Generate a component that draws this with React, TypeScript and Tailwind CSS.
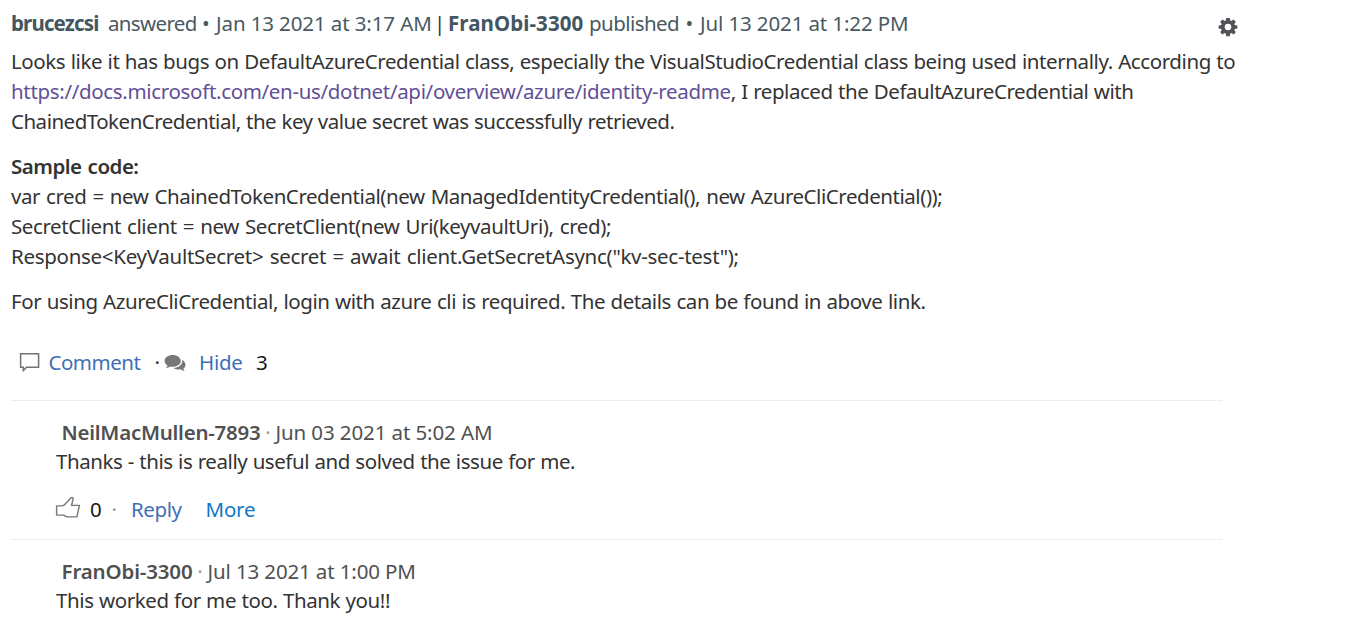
import type { ReactNode } from "react";

function GearIcon() {
  return (
    <svg width="20" height="20" viewBox="0 0 20 20" className="text-[#505357]">
      <path
        fill="currentColor"
        fillRule="evenodd"
        d="M8.2 1h3.6l.5 2.6 1.1.5 2.2-1.5 2.2 2.2-1.5 2.2.5 1.2 2.6.4v2.8l-2.6.5-.5 1.1 1.5 2.2-2.2 2.2-2.2-1.5-1.1.5-.5 2.8H8.2l-.5-2.8-1.1-.5-2.2 1.5-2.2-2.2 1.5-2.2-.5-1.1L.6 11.4V8.6l2.6-.4.5-1.2-1.5-2.2 2.2-2.2 2.2 1.5 1.1-.5ZM10 6.700a3.300 3.300 0 1 0 0 6.600a3.300 3.300 0 0 0 0-6.600Z"
      />
    </svg>
  );
}

function CommentIcon() {
  return (
    <svg width="22" height="20" viewBox="0 0 22 20" fill="none">
      <path
        d="M1.600 1.700h18v13.600H7.500L4.300 18.600v-3.300H1.600Z"
        stroke="#77706c"
        strokeWidth="1.500"
      />
    </svg>
  );
}

function CommentsIcon() {
  return (
    <svg width="22" height="18" viewBox="0 0 22 18" fill="#777">
      <path d="M8.700 1C4.200 1 .6 3.600.6 6.900c0 1.900 1.200 3.500 3 4.600-.3.900-.9 1.600-1.600 2.300 1.700 0 3.200-.6 4.300-1.400.8.200 1.600.3 2.400.3 4.500 0 8.100-2.600 8.100-5.800S13.200 1 8.700 1Z" />
      <path d="M18.200 5.700c.1.400.1.800.1 1.200 0 3.800-3.800 6.700-8.600 7 1.300 1 3.200 1.600 5.200 1.600.7 0 1.300-.1 1.900-.2 1 .9 2.300 1.600 3.900 1.600-.7-.7-1.200-1.300-1.400-2.100 1.400-.9 2.200-2.200 2.200-3.700 0-2.300-1.300-4.200-3.300-5.400Z" />
    </svg>
  );
}

function ThumbIcon() {
  return (
    <svg width="26" height="24" viewBox="0 0 26 24" fill="none">
      <path
        d="M1.600 9.900h5.200c1.600 0 2.400-.6 3.500-1.900l5.500-5.900c1.100-1.200 2.700-.2 2.300 1.200l-1.600 6.100h7.900l-2.500 11.500H11.700l-3.100-1.800h-7Z"
        stroke="#777"
        strokeWidth="1.400"
        strokeLinejoin="round"
      />
    </svg>
  );
}

interface CommentHeaderProps {
  author: ReactNode;
  date: ReactNode;
}

function CommentHeader({ author, date }: CommentHeaderProps) {
  return (
    <div className="flex h-[29px] pl-[61.5px] leading-[30px] text-[#505050]">
      {author}
      <span className="w-[15px] text-center text-[#999]">·</span>
      {date}
    </div>
  );
}

function App() {
  return (
    <div className="h-[617px] w-[1371px] overflow-hidden bg-white pt-2 font-['Noto_Sans','Open_Sans',sans-serif] text-[20.5px] leading-[30px] whitespace-nowrap text-[#333]">
      <header className="flex h-[38px] pl-[11px] text-[#49595f]">
        <span className="w-[97px] font-bold tracking-[-0.85px] text-[#435662]">
          brucezcsi
        </span>
        <span className="w-[94px] tracking-[-0.65px]">answered</span>
        <span className="w-[14px]">•</span>
        <span className="w-[218px] tracking-[-0.11px]">
          Jan 13 2021 at 3:17 AM
        </span>
        <span className="w-[14px] text-[#333]">|</span>
        <span className="w-[141px] font-bold tracking-[0.08px] text-[#435662]">
          FranObi-3300
        </span>
        <span className="w-[96.500px] tracking-[-0.55px]">published</span>
        <span className="w-[14.500px]">•</span>
        <span className="w-[518px] tracking-[-0.12px]">
          Jul 13 2021 at 1:22 PM
        </span>
        <span className="pt-[9px]">
          <GearIcon />
        </span>
      </header>

      <div className="pl-[11px]">
        <p className="mb-[15px] [word-spacing:0.5px]">
          <span className="tracking-[-0.41px]">
            Looks like it has bugs on DefaultAzureCredential class, especially
            the VisualStudioCredential class being used internally. According to
          </span>
          <br />
          <a className="tracking-[-0.33px] text-[#624f96]">
            https://docs.microsoft.com/en-us/dotnet/api/overview/azure/identity-readme
          </a>
          <span className="tracking-[-0.44px]">
            , I replaced the DefaultAzureCredential with
          </span>
          <br />
          <span className="tracking-[-0.5px]">
            ChainedTokenCredential, the key value secret was successfully
            retrieved.
          </span>
        </p>
        <p className="mb-[15px] [word-spacing:1.2px]">
          <strong className="font-semibold tracking-[-0.5px]">
            Sample code:
          </strong>
          <br />
          <span className="tracking-[-0.45px]">
            var cred = new ChainedTokenCredential(new
            ManagedIdentityCredential(), new AzureCliCredential());
          </span>
          <br />
          <span className="tracking-[-0.41px]">
            SecretClient client = new SecretClient(new Uri(keyvaultUri), cred);
          </span>
          <br />
          <span className="tracking-[-0.29px]">
            Response&lt;KeyVaultSecret&gt; secret = await
            client.GetSecretAsync("kv-sec-test");
          </span>
        </p>
        <p className="tracking-[-0.42px] [word-spacing:0.5px]">
          For using AzureCliCredential, login with azure cli is required. The
          details can be found in above link.
        </p>
      </div>

      <div className="mt-[31px] flex h-[53px] pl-[19px] text-[#3f6fb5]">
        <span className="w-[29.500px] pt-[5px]">
          <CommentIcon />
        </span>
        <a className="w-[106px] tracking-[-0.5px]">Comment</a>
        <span className="w-[9.500px] text-[#333]">·</span>
        <span className="w-[35px] pt-[7px]">
          <CommentsIcon />
        </span>
        <a className="w-[57px] tracking-[-0.3px]">Hide</a>
        <span className="text-[#171717]">3</span>
      </div>

      <div className="ml-[11px] w-[1211px] border-t border-dotted border-[#ddd]" />
      <div className="h-[138px] pt-4">
        <CommentHeader
          author={
            <span className="font-semibold tracking-[-0.25px]">
              NeilMacMullen-7893
            </span>
          }
          date={
            <span className="tracking-[-0.1px]">Jun 03 2021 at 5:02 AM</span>
          }
        />
        <p className="pl-[56px] tracking-[-0.44px] [word-spacing:0.5px]">
          Thanks - this is really useful and solved the issue for me.
        </p>
        <div className="mt-[18px] flex pl-[55px] text-[#3f6fb5]">
          <span className="w-[35px] pt-[2px]">
            <ThumbIcon />
          </span>
          <span className="w-[21.500px] text-[#171717]">0</span>
          <span className="w-[19.500px] text-[#999]">·</span>
          <a className="w-[74.500px] tracking-[-0.4px]">Reply</a>
          <a className="tracking-[-0.2px] text-[#0f77c8]">More</a>
        </div>
      </div>

      <div className="ml-[11px] w-[1211px] border-t border-dotted border-[#ddd]" />
      <div className="pt-4">
        <CommentHeader
          author={
            <span className="font-semibold tracking-[-0.15px]">
              FranObi-3300
            </span>
          }
          date={
            <span className="tracking-[-0.13px]">Jul 13 2021 at 1:00 PM</span>
          }
        />
        <p className="pl-[56px] tracking-[-0.41px] [word-spacing:0.5px]">
          This worked for me too. Thank you!!
        </p>
      </div>
    </div>
  );
}

export default App;
